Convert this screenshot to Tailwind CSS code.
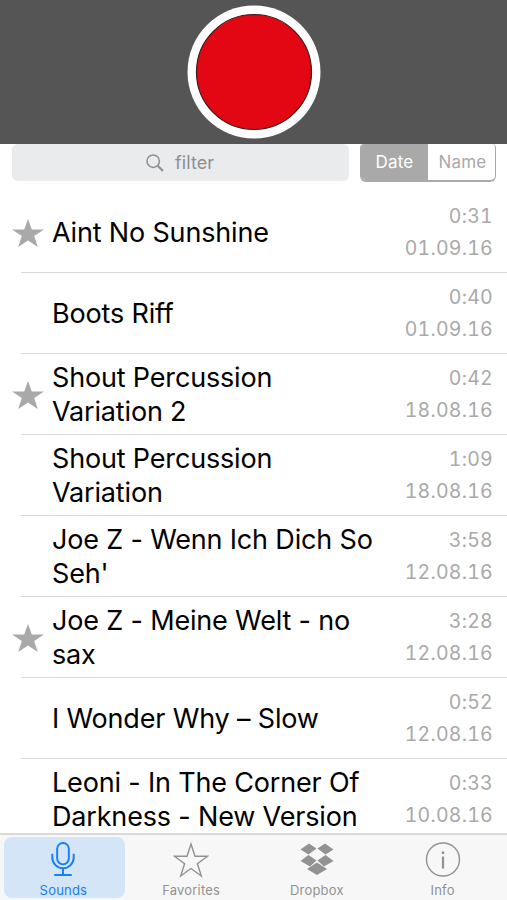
<!DOCTYPE html>
<html lang="en">

<head>
  <meta charset="UTF-8" />
  <meta name="viewport" content="width=device-width, initial-scale=1" />
  <title>Sounds</title>
  <script src="https://cdn.jsdelivr.net/npm/@tailwindcss/browser@4"></script>
</head>

<body class="flex flex-col h-screen overflow-hidden bg-white font-['Inter','Liberation_Sans',sans-serif]">
  <header class="h-36 shrink-0 bg-[#555555] flex justify-center pt-[5px]">
    <button aria-label="Record" class="size-[134px]">
      <svg viewBox="0 0 134 134" class="size-full">
        <circle cx="67" cy="67" r="66.5" fill="#fff" />
        <circle cx="67" cy="67" r="57.5" fill="#e30613" stroke="#3a1a1a" stroke-width="1.2" />
      </svg>
    </button>
  </header>

  <div class="h-12 shrink-0 flex items-start pl-3 pr-[11px] gap-[11px]">
    <div class="w-[337px] h-[37px] rounded-md bg-[#eaebed] flex items-center pl-[134px] text-[#8e8e93]">
      <svg viewBox="0 0 18 18" class="size-[18px] mr-[11px]" fill="none" stroke="#8e8e93" stroke-width="1.5">
        <circle cx="7.2" cy="7.2" r="6.2" />
        <path d="M11.7 11.7 17 17" stroke-width="2" />
      </svg>
      <span class="text-[18px] tracking-[0.1px]">filter</span>
    </div>
    <div class="flex w-[136px] h-[38px] rounded-b-md rounded-t-sm border border-t-0 border-b-2 border-[#a9a9a9] overflow-hidden text-[17px] tracking-[0.2px]">
      <button class="w-[67px] pt-0.5 bg-[#a9a9a9] text-white">Date</button>
      <button class="flex-1 pt-0.5 pl-0.5 text-[#a9a9a9]">Name</button>
    </div>
  </div>

  <main id="sounds" class="flex-1 min-h-0 overflow-hidden"></main>

  <nav class="h-[67px] shrink-0 bg-[#f7f7f7] border-t-2 border-[#dadada] grid grid-cols-4 pt-0.5 text-[13px] leading-4 tracking-[0.2px] text-[#929292]">
    <button class="ml-1 mr-[2px] h-[61px] rounded-lg bg-[#d5e5f8] text-[#147efb] flex flex-col items-center pt-[5px] pr-0.5">
      <svg viewBox="0 0 26 36" class="w-[26px] h-9" fill="none" stroke="currentColor" stroke-width="2">
        <rect x="7" y="1" width="12" height="22" rx="6" />
        <path d="M2 12v4a11 11 0 0 0 22 0v-4M13 27v7M4 34h18" />
      </svg>
      <span class="mt-[5px]">Sounds</span>
    </button>
    <button class="flex flex-col items-center pt-[5px] pl-0.5">
      <svg viewBox="0 0 36 36" class="size-9" fill="none" stroke="currentColor" stroke-width="1.4">
        <path d="M18 2 22 14.3H34.500L24.400 21.800 28.300 34 18 26.500 7.700 34 11.600 21.800 1.500 14.300H14Z" />
      </svg>
      <span class="mt-1">Favorites</span>
    </button>
    <button class="flex flex-col items-center pt-[5px]">
      <svg viewBox="0 0 36 36" class="size-9" fill="currentColor">
        <path d="M10 1.500 17.500 6.500 9.500 12.500 1.500 7.500ZM26 1.500 34.500 7.500 26.500 12.500 18.500 6.500ZM9.500 13 17.500 18.500 11 24.500 1.500 19ZM26.500 13 34.500 19 25 24.500 18.500 18.500Z" />
        <path d="M18 20.500 28 27 18 33 8 27Z" />
      </svg>
      <span class="mt-1">Dropbox</span>
    </button>
    <button class="flex flex-col items-center pt-[5px] pr-0.5">
      <svg viewBox="0 0 36 36" class="size-9" fill="none" stroke="currentColor">
        <circle cx="18" cy="17.500" r="16.500" stroke-width="1.400" />
        <path d="M18 14.500v12" stroke-width="2.200" />
        <path d="M18 9.500v2.500" stroke-width="2.400" />
      </svg>
      <span class="mt-1">Info</span>
    </button>
  </nav>

  <script>
    const sounds = [
      { title: "Aint No Sunshine", length: "0:31", date: "01.09.16", favorite: true },
      { title: "Boots Riff", length: "0:40", date: "01.09.16" },
      { title: "Shout Percussion<br>Variation 2", length: "0:42", date: "18.08.16", favorite: true },
      { title: "Shout Percussion<br>Variation", length: "1:09", date: "18.08.16" },
      { title: "Joe Z - Wenn Ich Dich So<br>Seh'", length: "3:58", date: "12.08.16" },
      { title: "Joe Z - Meine Welt - no<br>sax", length: "3:28", date: "12.08.16", favorite: true },
      { title: "I Wonder Why – Slow", length: "0:52", date: "12.08.16" },
      { title: "Leoni - In The Corner Of<br>Darkness - New Version", length: "0:33", date: "10.08.16" }
    ];

    const star = `
      <svg viewBox="0 0 32 28" class="w-8 h-7" fill="#a9a9a9">
        <path d="M16 0 19.800 10.500H32L22.200 17 25.800 28 16 21.400 6.200 28 9.800 17 0 10.500H12.200Z" />
      </svg>`;

    document.getElementById('sounds').innerHTML = sounds.map(s => `
      <div class="h-[81px] flex pl-3">
        <div class="w-[9px] flex items-center overflow-visible">
          <div class="w-8 shrink-0">${s.favorite ? star : ''}</div>
        </div>
        <div class="flex-1 flex items-center justify-between border-b border-[#dadadb] pl-[31px] pr-[14px]">
          <div class="text-[27px] leading-[33.500px] pt-px tracking-[-0.17px] text-black whitespace-nowrap">${s.title}</div>
          <div class="text-right text-[19.500px] leading-[31.500px] pt-px tracking-[0.25px] tabular-nums text-[#a9a9a9]">${s.length}<br>${s.date}</div>
        </div>
      </div>`).join('');
  </script>
</body>

</html>
